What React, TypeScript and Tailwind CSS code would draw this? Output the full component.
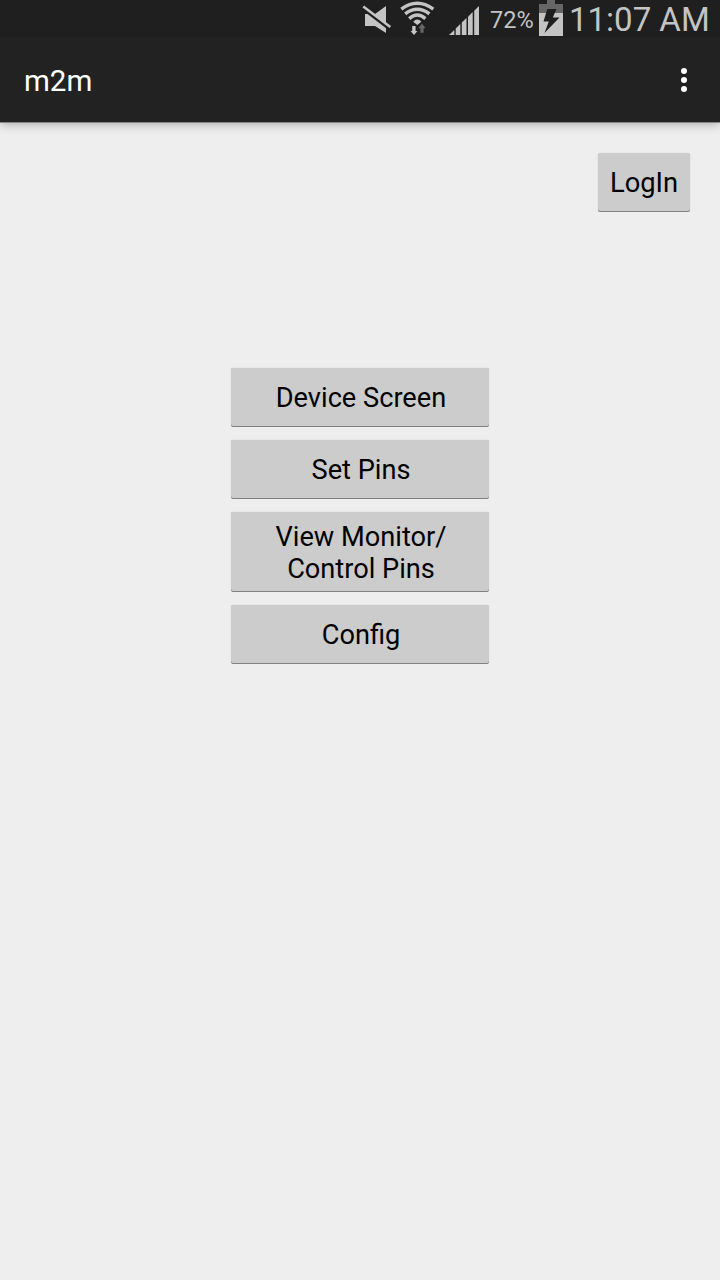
import React from 'react';

function MuteIcon() {
  return (
    <svg className="h-10 w-[30px] shrink-0" viewBox="362 0 30 40" fill="#c4c4c4">
      <path d="M365 14H375L386 6V33L375 26H365Z" />
      <path d="M361.5 7.4L390 29.4" stroke="#1f1f1f" strokeWidth="3" />
      <path d="M363.3 6.6L390.3 27" stroke="#c4c4c4" strokeWidth="2.5" />
    </svg>
  );
}

function WifiIcon() {
  return (
    <svg className="ml-2 h-10 w-[36px] shrink-0" viewBox="400 0 36 40" fill="none">
      <g stroke="#c4c4c4" strokeWidth="3.4">
        <path d="M401.3 9.2Q417.3-2.5 433.3 9.2" />
        <path d="M405.2 13.8Q417.3 4.6 429.4 13.8" />
        <path d="M409.2 18.6Q417.3 11.6 425.4 18.6" />
      </g>
      <path d="M413.2 21.8Q417.3 17.2 421.4 21.8L417.3 25Z" fill="#c4c4c4" />
      <path d="M412.2 26H415.6V31H417.5L414 35L410.5 31H412.2Z" fill="#c4c4c4" />
      <path d="M420.4 32.7H423.6V28.2H425.6L422 23.6L418.4 28.2H420.4Z" fill="#666" />
    </svg>
  );
}

function SignalIcon() {
  return (
    <svg className="ml-[13px] h-10 w-[31px] shrink-0" viewBox="449 0 31 40" fill="#c4c4c4">
      <path d="M449 35L454.3 30V35Z" />
      <path d="M455.7 28.6L460.3 24V35H455.7Z" />
      <path d="M461.8 22.6L466.5 18V35H461.8Z" />
      <path d="M468 16.7L472.7 12V35H468Z" />
      <path d="M474.2 10.7L479 6V35H474.2Z" />
    </svg>
  );
}

function BatteryIcon() {
  return (
    <svg className="h-10 w-6 shrink-0" viewBox="539 0 24 40">
      <path d="M547 0H555V4H563V13H539V4H547Z" fill="#666" />
      <path d="M539 13H563V36H539Z" fill="#c4c4c4" />
      <path d="M547.3 9H556.5L552.8 17.5H559.5L544.5 33L548.8 21.5H543.5Z" fill="#1f1f1f" />
    </svg>
  );
}

function MenuButton({ label, tall = false }: { label: React.ReactNode; tall?: boolean }) {
  return (
    <button
      className={`flex w-[258px] shrink-0 items-center justify-center rounded-xs bg-[#cccccc] pl-[2px] text-center text-[27.2px] leading-8 text-black shadow-[0_0_1px_rgba(0,0,0,0.25),0_1px_0_#858585] ${tall ? 'h-[79px] pt-[3px]' : 'h-[58px] pt-[2px]'}`}
    >
      <span>{label}</span>
    </button>
  );
}

export default function App() {
  return (
    <div className="flex h-[1280px] w-[720px] flex-col overflow-hidden bg-[#eeeeee] font-['Roboto',sans-serif]">
      <header className="z-10 shrink-0 bg-[#222222] shadow-[0_1px_0_#858585,0_2px_10px_rgba(0,0,0,0.3)]">
        <div className="flex h-[38px] items-start bg-[#1f1f1f] pl-[362px] text-[#c4c4c4]">
          <MuteIcon />
          <WifiIcon />
          <SignalIcon />
          <span className="ml-[10px] w-[49px] shrink-0 whitespace-nowrap text-[23.5px] leading-10">72%</span>
          <BatteryIcon />
          <span className="ml-[6px] whitespace-nowrap text-[33px] leading-10">11:07 AM</span>
        </div>
        <div className="flex h-[84px] items-center justify-between pr-[33px] pl-6">
          <h1 className="pt-[2px] text-[29.5px] leading-8 text-white">m2m</h1>
          <button aria-label="More options" className="flex flex-col gap-[3px]">
            <span className="size-1.5 rounded-full bg-white" />
            <span className="size-1.5 rounded-full bg-white" />
            <span className="size-1.5 rounded-full bg-white" />
          </button>
        </div>
      </header>
      <main className="flex flex-col items-center">
        <button className="mt-[31px] mr-[30px] flex h-[58px] w-[92px] items-center justify-center self-end rounded-xs bg-[#cccccc] pt-[2px] text-[27.3px] leading-8 text-black shadow-[0_0_1px_rgba(0,0,0,0.25),0_1px_0_#858585]">
          LogIn
        </button>
        <nav className="mt-[157px] flex flex-col gap-[14px]">
          <MenuButton label="Device Screen" />
          <MenuButton label="Set Pins" />
          <MenuButton label={<>View Monitor/<br />Control Pins</>} tall />
          <MenuButton label="Config" />
        </nav>
      </main>
    </div>
  );
}
